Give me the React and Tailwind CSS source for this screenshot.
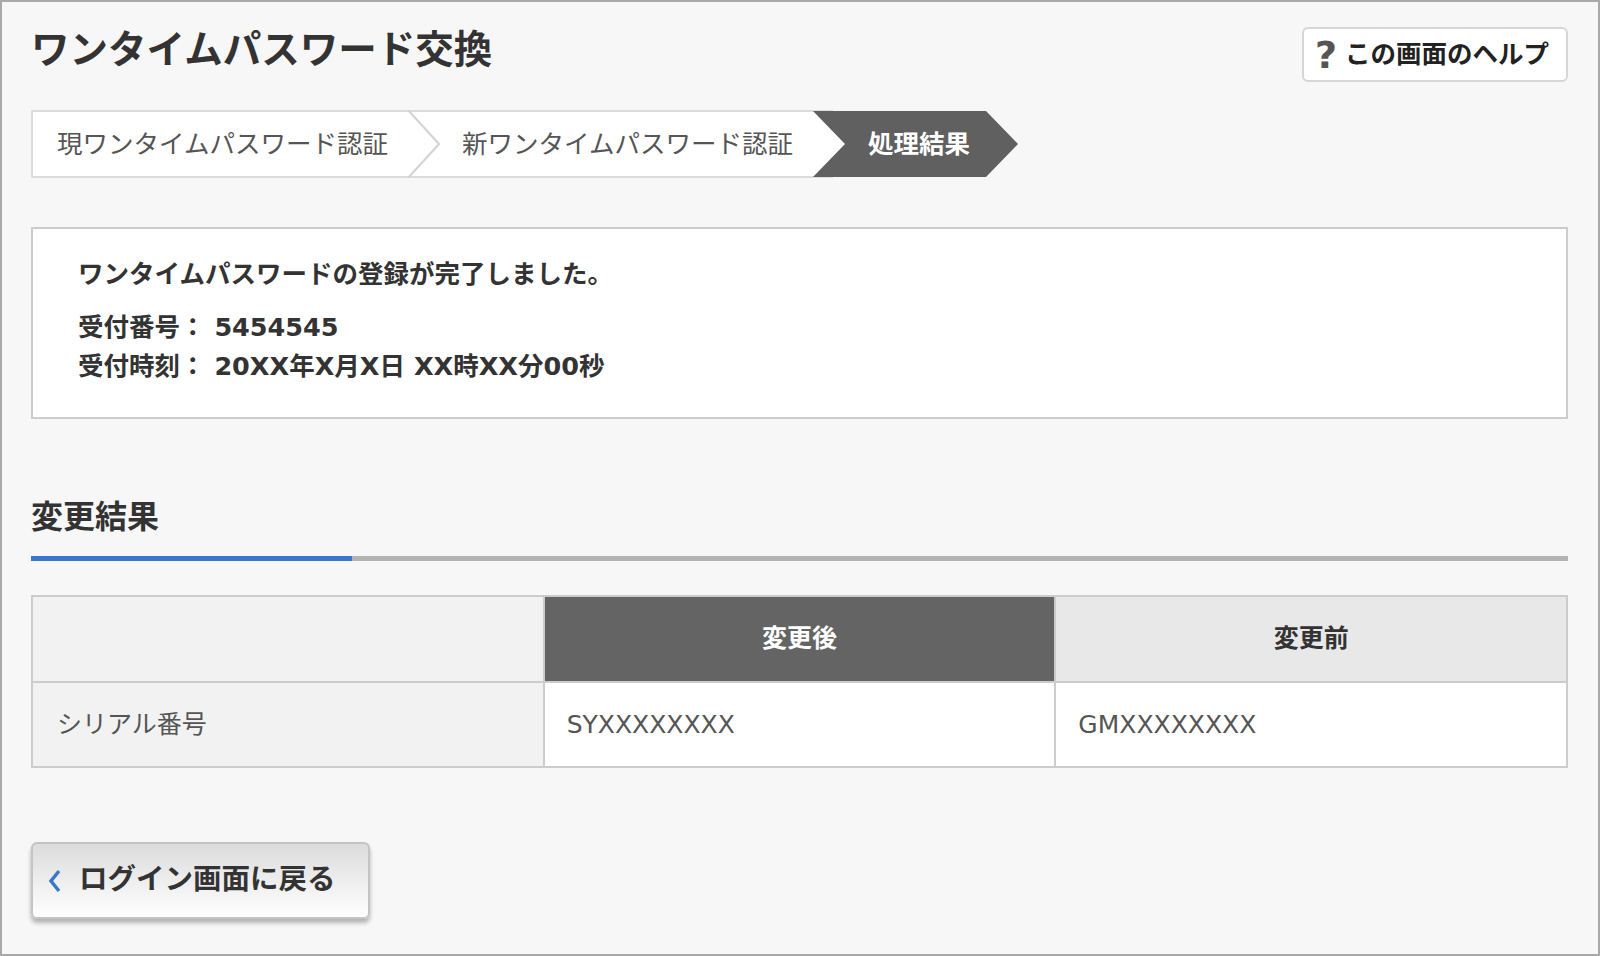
import React from 'react';

const FONT = "font-['DejaVu_Sans','Noto_Sans_CJK_JP',sans-serif]";

const Chevron = () => (
  <svg width="32" height="68" viewBox="0 0 32 68" className="shrink-0 block">
    <rect width="32" height="68" fill="#ffffff" />
    <rect width="32" height="2" fill="#dcdcdc" />
    <rect y="66" width="32" height="2" fill="#dcdcdc" />
    <polyline points="0,0 31,34 0,68" fill="none" stroke="#d2d2d2" strokeWidth="2" />
  </svg>
);

const Breadcrumb = () => (
  <div className="flex h-[68px] mt-[28px] text-[25.5px] text-[#555]">
    <div className="flex items-center w-[377px] bg-white border-y-2 border-l-2 border-[#dcdcdc] pl-[24px] whitespace-nowrap">
      現ワンタイムパスワード認証
    </div>
    <Chevron />
    <div className="flex items-center w-[373px] bg-white border-y-2 border-[#dcdcdc] pl-[22px] whitespace-nowrap">
      新ワンタイムパスワード認証
    </div>
    <div className="relative flex items-center w-[205px] pl-[55px] text-white font-bold text-[25.5px]">
      <svg width="205" height="68" viewBox="0 0 205 68" className="absolute inset-0">
        <polygon points="0,0 32,34 0,68" fill="#ffffff" />
        <rect width="20" height="2" fill="#dcdcdc" />
        <rect y="66" width="20" height="2" fill="#dcdcdc" />
        <polygon points="0,1 173,1 205,34 173,67 0,67 32,34" fill="#606060" />
      </svg>
      <span className="relative">処理結果</span>
    </div>
  </div>
);

export default function App() {
  return (
    <div className={`w-[1600px] h-[956px] border-2 border-[#a9a9a9] bg-[#f7f7f7] pl-[29px] pr-[30px] pt-[25px] text-[#333] ${FONT}`}>
      <div className="flex justify-between items-start">
        <h1 className="mt-[3px] text-[38.5px] leading-[39px] font-bold">ワンタイムパスワード交換</h1>
        <button className="flex items-center h-[55px] w-[266px] bg-white border-2 border-[#d6d6d6] rounded-[6px] pl-[11px]">
          <span className="text-[38px] leading-none text-[#555] mr-[8px] font-bold font-['DejaVu_Sans',sans-serif]">?</span>
          <span className="text-[25.5px] font-bold text-[#222] whitespace-nowrap">この画面のヘルプ</span>
        </button>
      </div>

      <Breadcrumb />

      <div className="mt-[49px] h-[192px] bg-white border-2 border-[#cccccc] pt-[31px] pl-[45px] text-[25.5px] leading-[28px] font-bold">
        <p className="mb-[25px]">ワンタイムパスワードの登録が完了しました。</p>
        <p className="mb-[11px]">受付番号： 5454545</p>
        <p>受付時刻： 20XX年X月X日 XX時XX分00秒</p>
      </div>

      <h2 className="mt-[82px] text-[32px] leading-[32px] font-bold">変更結果</h2>
      <div className="mt-[23px] h-[5px] bg-[#b3b3b3] flex">
        <div className="w-[321px] bg-[#3a78d0]" />
      </div>

      <table className="mt-[34px] w-full border-collapse table-fixed text-[25px]">
        <tbody>
          <tr className="h-[86px]">
            <td className="border-2 border-[#cccccc] bg-[#f2f2f2]" />
            <td className="border-2 border-[#cccccc] bg-[#646464] text-white font-bold text-center">変更後</td>
            <td className="border-2 border-[#cccccc] bg-[#e8e8e8] text-[#333] font-bold text-center">変更前</td>
          </tr>
          <tr className="h-[85px] text-[#555]">
            <td className="border-2 border-[#cccccc] bg-[#f2f2f2] pl-[24px]">シリアル番号</td>
            <td className="border-2 border-[#cccccc] bg-white pl-[22px]">SYXXXXXXXX</td>
            <td className="border-2 border-[#cccccc] bg-white pl-[22px]">GMXXXXXXXX</td>
          </tr>
        </tbody>
      </table>

      <button className="mt-[74px] flex items-center h-[77px] w-[339px] rounded-[6px] border-2 border-[#c4c4c4] bg-linear-to-b from-[#dcdcdc] to-white shadow-[0_4px_4px_rgba(0,0,0,0.28)] pl-[14px]">
        <svg width="16" height="26" viewBox="0 0 16 26" className="mr-[16px]">
          <polyline points="12,3 4,13 12,23" fill="none" stroke="#3b78c8" strokeWidth="3.5" />
        </svg>
        <span className="text-[28.5px] font-bold text-[#333] whitespace-nowrap">ログイン画面に戻る</span>
      </button>
    </div>
  );
}
